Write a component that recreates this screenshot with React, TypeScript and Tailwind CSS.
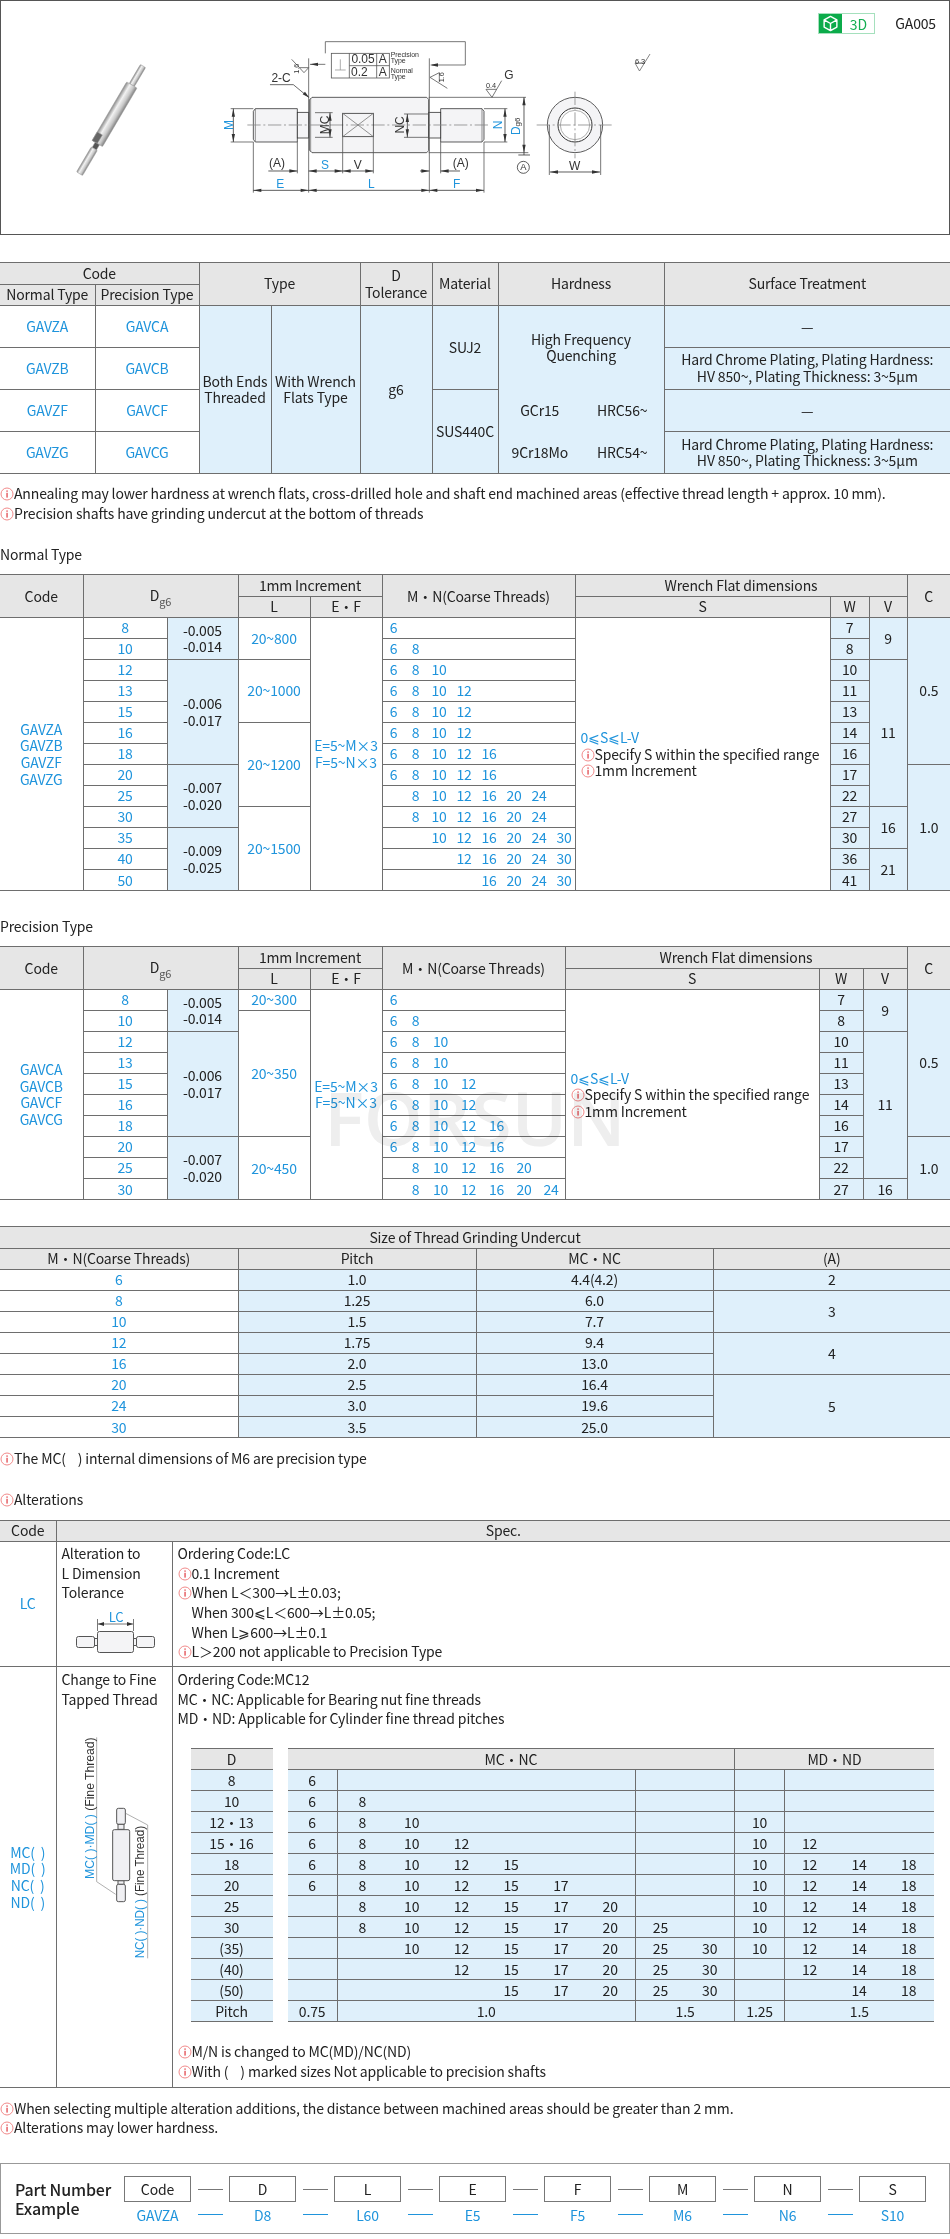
import type { ReactNode } from "react";

const line = "border border-[#6e6e6e]";
const head = "border border-[#6e6e6e] bg-[#e6e6e6] font-normal h-[21px] p-0 text-center align-middle";
const plain = "border border-[#6e6e6e] p-0 text-center align-middle";
const fill = "border border-[#6e6e6e] bg-[#dff0fb] p-0 text-center align-middle";
const blue = "border border-[#6e6e6e] text-[#1f94dc] p-0 text-center align-middle";
const wrap = "border-y border-[#6e6e6e]";
const tableCls = "w-full table-fixed border-collapse border-hidden leading-[16.6px]";

function Info() {
  return (
    <svg width="14" height="14" viewBox="0 0 14 14" className="inline-block align-[-2px]">
      <circle cx="7" cy="7" r="6" fill="none" stroke="#f28b8b" strokeWidth="1" />
      <rect x="6.4" y="5.8" width="1.3" height="4.8" fill="#e2494f" />
      <rect x="6.4" y="3.4" width="1.3" height="1.4" fill="#e2494f" />
    </svg>
  );
}

function Note({ children }: { children: ReactNode }) {
  return (
    <div className="h-[19.6px] leading-[19.6px] whitespace-nowrap">
      <Info />
      {children}
    </div>
  );
}

function Cols({ widths }: { widths: string[] }) {
  return (
    <colgroup>
      {widths.map((w, i) => (
        <col key={i} style={{ width: w }} />
      ))}
    </colgroup>
  );
}

function HDim({ x1, x2, y }: { x1: number; x2: number; y: number }) {
  return (
    <g>
      <path d={`M${x1} ${y}H${x2}`} />
      <path d={`M${x1} ${y}l24 -5v10z M${x2} ${y}l-24 -5v10z`} fill="#333" stroke="none" />
    </g>
  );
}

function VDim({ y1, y2, x }: { y1: number; y2: number; x: number }) {
  return (
    <g>
      <path d={`M${x} ${y1}V${y2}`} />
      <path d={`M${x} ${y1}l-5 24h10z M${x} ${y2}l-5 -24h10z`} fill="#333" stroke="none" />
    </g>
  );
}

function Label({ x, y, children, color = "#333", size = 36, rot }: { x: number; y: number; children: ReactNode; color?: string; size?: number; rot?: boolean }) {
  return (
    <text
      transform={`translate(${x} ${y})${rot ? " rotate(-90)" : ""}`}
      textAnchor="middle"
      dominantBaseline="central"
      fill={color}
      stroke="none"
      fontSize={size}
    >
      {children}
    </text>
  );
}

function Drawing() {
  const b = "#1f94dc";
  return (
    <svg width="948" height="233" viewBox="1 1 948 233" className="block" fontFamily="'Liberation Sans', sans-serif">
      <defs>
        <linearGradient id="shaft" x1="0" x2="1" y1="0" y2="0">
          <stop offset="0" stopColor="#8a8a8a" />
          <stop offset="0.35" stopColor="#f2f2f2" />
          <stop offset="0.7" stopColor="#c8c8c8" />
          <stop offset="1" stopColor="#808080" />
        </linearGradient>
      </defs>

      {/* product view */}
      <g transform="translate(143 66) rotate(30.5)" fill="url(#shaft)" stroke="#999" strokeWidth="0.5">
        <rect x="-3" y="0" width="6" height="22" rx="1" />
        <rect x="-6" y="22" width="12" height="68" rx="1" />
        <rect x="-6" y="80" width="6" height="10" fill="#666" />
        <rect x="-2.5" y="90" width="5" height="6" fill="#555" />
        <rect x="-3.5" y="96" width="7" height="29" rx="1" />
      </g>

      <g transform="translate(200 20) scale(.33333)" stroke="#333" strokeWidth="2.4" fill="none">
        <path d="M336 232H680L686 238V392L680 398H336L328 390V240Z" fill="#f4f4f6" />
        <path d="M166 266H292V366H166L160 358V274Z" fill="#f4f4f6" />
        <path d="M722 266H846L852 274V358L846 366H722Z" fill="#f4f4f6" />
        <rect x="292" y="277" width="34" height="77" fill="#f4f4f6" />
        <rect x="686" y="277" width="36" height="77" fill="#f4f4f6" />
        <path d="M166 266V366M846 266V366M332 234V396" stroke="#777" />
        <path d="M142 315H870" stroke="#888" strokeDasharray="40 8 6 8" />
        <rect x="428" y="280" width="92" height="70" />
        <path d="M428 280L520 350M520 280L428 350" stroke="#777" />

        {/* extension lines */}
        <path d="M160 366V518M326 115V518M688 115V518M852 366V518M428 350V460M520 350V460M292 366V460M722 366V460" stroke="#555" />
        <path d="M92 266H160M92 366H160M852 266H922M852 366H922M686 232H978M686 398H985M345 278H398M345 352H398M612 282H686M612 352H686" stroke="#555" />

        <VDim x={100} y1={266} y2={366} />
        <VDim x={915} y1={266} y2={366} />
        <VDim x={972} y1={232} y2={398} />
        <VDim x={390} y1={278} y2={352} />
        <VDim x={622} y1={282} y2={352} />
        <HDim x1={160} x2={326} y={511} />
        <HDim x1={326} x2={688} y={511} />
        <HDim x1={688} x2={852} y={511} />
        <HDim x1={326} x2={428} y={453} />
        <HDim x1={428} x2={520} y={453} />
        <path d="M205 453H292M660 453H688M722 453H780" />
        <path d="M292 453l-24 -5v10zM688 453l-24 -5v10zM722 453l24 -5v10z" fill="#333" stroke="none" />

        <Label x={88} y={315} color={b} rot>M</Label>
        <Label x={375} y={315} rot>MC</Label>
        <Label x={600} y={315} rot>NC</Label>
        <Label x={895} y={315} color={b} rot>N</Label>
        <text transform="translate(960 345) rotate(-90)" fill={b} stroke="none" fontSize="36">
          D<tspan fontSize="24" fill="#333">g6</tspan>
        </text>
        <Label x={231} y={430}>(A)</Label>
        <Label x={375} y={435} color={b}>S</Label>
        <Label x={473} y={435}>V</Label>
        <Label x={782} y={430}>(A)</Label>
        <Label x={241} y={493} color={b}>E</Label>
        <Label x={514} y={493} color={b}>L</Label>
        <Label x={770} y={493} color={b}>F</Label>

        {/* datum */}
        <path d="M972 398V405M955 405H990" />
        <circle cx="970" cy="442" r="18" />
        <Label x={970} y={442} size={28}>A</Label>

        {/* perpendicularity frame */}
        <path d="M376 100V65H796V135H695M376 133H330" stroke="#555" />
        <path d="M330 133l24 -5v10zM690 135l24 -5v10z" fill="#333" stroke="none" />
        <rect x="394" y="100" width="174" height="74" fill="#fff" stroke="#555" />
        <path d="M448 100V174M530 100V174M448 137H568" stroke="#555" />
        <path d="M421 118V150M405 150H437" stroke="#999" />
        <Label x={489} y={118}>0.05</Label>
        <Label x={548} y={118}>A</Label>
        <Label x={478} y={155}>0.2</Label>
        <Label x={548} y={155}>A</Label>
        <g stroke="none" fill="#333" fontSize="21">
          <text x="572" y="110">Precision</text>
          <text x="572" y="128">Type</text>
          <text x="572" y="158">Normal</text>
          <text x="572" y="177">Type</text>
        </g>

        {/* surface marks */}
        <path d="M275 118L312 158L326 143H298" stroke="#555" />
        <Label x={290} y={146} size={22} rot>1.6</Label>
        <path d="M742 205L690 172L718 158V186" stroke="#555" />
        <Label x={726} y={172} size={22} rot>1.6</Label>
        <Label x={243} y={174}>2-C</Label>
        <path d="M210 194H280L326 232" stroke="#444" />
        <path d="M328 233l-20 -10l7 -8z" fill="#333" stroke="none" />
        <Label x={927} y={165}>G</Label>
        <path d="M905 182L876 232L858 208H890" stroke="#555" />
        <Label x={873} y={198} size={22}>0.4</Label>

        {/* end view */}
        <circle cx="1125" cy="315" r="83" fill="#f4f4f6" />
        <circle cx="1125" cy="315" r="51" strokeWidth="3" fill="#fff" />
        <circle cx="1125" cy="315" r="44" stroke="#999" />
        <path d="M1010 315H1235M1125 215V415" stroke="#888" strokeDasharray="40 8 6 8" />
        <path d="M1048 315V465M1202 315V465" stroke="#555" />
        <HDim x1={1050} x2={1200} y={456} />
        <Label x={1124} y={438}>W</Label>
      </g>

      {/* 6.3 mark */}
      <path d="M650 54L639.5 71L635 63H645" fill="none" stroke="#666" strokeWidth="0.8" />
      <text x="640" y="64" fontSize="7.5" textAnchor="middle" fill="#333">6.3</text>
    </svg>
  );
}

const normalCols = "grid grid-cols-[22px_22px_25px_25px_25px_25px_25px_25px]";
const precisionCols = "grid grid-cols-[22px_22px_28px_28px_28px_27px_27px]";

function Nums({ values, all, cols }: { values: number[]; all: number[]; cols: string }) {
  return (
    <div className={`${cols} text-center`}>
      {all.map((n) => (
        <span key={n}>{values.includes(n) ? n : ""}</span>
      ))}
    </div>
  );
}

type Row = { d: number; m: number[]; w: number };

const normalRows: Row[] = [
  { d: 8, m: [6], w: 7 },
  { d: 10, m: [6, 8], w: 8 },
  { d: 12, m: [6, 8, 10], w: 10 },
  { d: 13, m: [6, 8, 10, 12], w: 11 },
  { d: 15, m: [6, 8, 10, 12], w: 13 },
  { d: 16, m: [6, 8, 10, 12], w: 14 },
  { d: 18, m: [6, 8, 10, 12, 16], w: 16 },
  { d: 20, m: [6, 8, 10, 12, 16], w: 17 },
  { d: 25, m: [8, 10, 12, 16, 20, 24], w: 22 },
  { d: 30, m: [8, 10, 12, 16, 20, 24], w: 27 },
  { d: 35, m: [10, 12, 16, 20, 24, 30], w: 30 },
  { d: 40, m: [12, 16, 20, 24, 30], w: 36 },
  { d: 50, m: [16, 20, 24, 30], w: 41 },
];

const precisionRows: Row[] = [
  { d: 8, m: [6], w: 7 },
  { d: 10, m: [6, 8], w: 8 },
  { d: 12, m: [6, 8, 10], w: 10 },
  { d: 13, m: [6, 8, 10], w: 11 },
  { d: 15, m: [6, 8, 10, 12], w: 13 },
  { d: 16, m: [6, 8, 10, 12], w: 14 },
  { d: 18, m: [6, 8, 10, 12, 16], w: 16 },
  { d: 20, m: [6, 8, 10, 12, 16], w: 17 },
  { d: 25, m: [8, 10, 12, 16, 20], w: 22 },
  { d: 30, m: [8, 10, 12, 16, 20, 24], w: 27 },
];

type Span = { at: number; n: number; a: string; b?: string };

const Dg6 = () => (
  <>
    D<sub className="text-[11px] text-[#555] align-[-2px] leading-none">g6</sub>
  </>
);

function SizeTable({
  widths,
  rows,
  codes,
  all,
  cols,
  tol,
  lens,
  vs,
  cs,
  children,
}: {
  widths: string[];
  rows: Row[];
  codes: string[];
  all: number[];
  cols: string;
  tol: Span[];
  lens: Span[];
  vs: Span[];
  cs: Span[];
  children?: ReactNode;
}) {
  const find = (list: Span[], i: number) => list.find((s) => s.at === i);
  return (
    <div className={`relative ${wrap}`}>
      <table className={tableCls}>
        <Cols widths={widths} />
        <thead>
          <tr>
            <th rowSpan={2} className={head}>Code</th>
            <th rowSpan={2} colSpan={2} className={head}><Dg6 /></th>
            <th colSpan={2} className={head}>1mm Increment</th>
            <th rowSpan={2} className={head}>M·N(Coarse Threads)</th>
            <th colSpan={3} className={head}>Wrench Flat dimensions</th>
            <th rowSpan={2} className={head}>C</th>
          </tr>
          <tr>
            <th className={head}>L</th>
            <th className={head}>E·F</th>
            <th className={head}>S</th>
            <th className={head}>W</th>
            <th className={head}>V</th>
          </tr>
        </thead>
        <tbody>
          {rows.map((r, i) => {
            const t = find(tol, i);
            const l = find(lens, i);
            const v = find(vs, i);
            const c = find(cs, i);
            return (
              <tr key={r.d}>
                {i === 0 && (
                  <td rowSpan={rows.length} className={blue}>
                    {codes.map((code) => (
                      <div key={code}>{code}</div>
                    ))}
                  </td>
                )}
                <td className={`${blue} h-[21px]`}>{r.d}</td>
                {t && (
                  <td rowSpan={t.n} className={fill}>
                    <div>{t.a}</div>
                    <div>{t.b}</div>
                  </td>
                )}
                {l && <td rowSpan={l.n} className={blue}>{l.a}</td>}
                {i === 0 && (
                  <td rowSpan={rows.length} className={blue}>
                    <div>E=5~M×3</div>
                    <div>F=5~N×3</div>
                  </td>
                )}
                <td className={`${blue} whitespace-nowrap`}>
                  <Nums values={r.m} all={all} cols={cols} />
                </td>
                {i === 0 && (
                  <td rowSpan={rows.length} className={`${line} p-0 pl-[5px] text-left align-middle`}>
                    <div className="text-[#1f94dc]">0⩽S⩽L-V</div>
                    <div className="whitespace-nowrap"><Info />Specify S within the specified range</div>
                    <div><Info />1mm Increment</div>
                  </td>
                )}
                <td className={fill}>{r.w}</td>
                {v && <td rowSpan={v.n} className={fill}>{v.a}</td>}
                {c && <td rowSpan={c.n} className={fill}>{c.a}</td>}
              </tr>
            );
          })}
        </tbody>
      </table>
      {children}
    </div>
  );
}

const undercut = [
  { m: 6, p: "1.0", mc: "4.4(4.2)", a: "2", n: 1 },
  { m: 8, p: "1.25", mc: "6.0", a: "3", n: 2 },
  { m: 10, p: "1.5", mc: "7.7" },
  { m: 12, p: "1.75", mc: "9.4", a: "4", n: 2 },
  { m: 16, p: "2.0", mc: "13.0" },
  { m: 20, p: "2.5", mc: "16.4", a: "5", n: 3 },
  { m: 24, p: "3.0", mc: "19.6" },
  { m: 30, p: "3.5", mc: "25.0" },
];

const fineHead = ["6", "8", "10", "12", "15", "17", "20", "25", "30", "10", "12", "14", "18"];
const fineRows = [
  { d: "8", on: "1000000000000" },
  { d: "10", on: "1100000000000" },
  { d: "12·13", on: "1110000001000" },
  { d: "15·16", on: "1111000001100" },
  { d: "18", on: "1111100001111" },
  { d: "20", on: "1111110001111" },
  { d: "25", on: "0111111001111" },
  { d: "30", on: "0111111101111" },
  { d: "(35)", on: "0011111111111" },
  { d: "(40)", on: "0001111110111" },
  { d: "(50)", on: "0000111110011" },
];

const fineCell = "bg-[#dff0fb] border-b border-[#6e6e6e] p-0 h-[21px] text-center";
const fineCellL = "bg-[#dff0fb] border-b border-l border-[#6e6e6e] p-0 h-[21px] text-center";

function FineTables() {
  return (
    <div className="mt-[19px] ml-[13px] flex gap-[15px] leading-[20px]">
      <table className="w-[82px] table-fixed border-collapse border-t border-[#6e6e6e]">
        <tbody>
          <tr>
            <td className="bg-[#e6e6e6] border-b border-[#6e6e6e] p-0 h-[21px] text-center">D</td>
          </tr>
          {fineRows.map((r) => (
            <tr key={r.d}>
              <td className={fineCell}>{r.d}</td>
            </tr>
          ))}
          <tr>
            <td className={fineCell}>Pitch</td>
          </tr>
        </tbody>
      </table>
      <table className="w-[646px] table-fixed border-collapse border-t border-[#6e6e6e]">
        <Cols widths={fineHead.map(() => "49.7px")} />
        <tbody>
          <tr>
            <td colSpan={9} className="bg-[#e6e6e6] border-b border-[#6e6e6e] p-0 h-[21px] text-center">MC·NC</td>
            <td colSpan={4} className="bg-[#e6e6e6] border-b border-l border-[#6e6e6e] p-0 h-[21px] text-center">MD·ND</td>
          </tr>
          {fineRows.map((r) => (
            <tr key={r.d}>
              {fineHead.map((n, i) => (
                <td key={i} className={i === 1 || i === 7 || i === 9 || i === 10 ? fineCellL : fineCell}>
                  {r.on[i] === "1" ? n : ""}
                </td>
              ))}
            </tr>
          ))}
          <tr>
            <td className={fineCell}>0.75</td>
            <td colSpan={6} className={fineCellL}>1.0</td>
            <td colSpan={2} className={fineCellL}>1.5</td>
            <td className={fineCellL}>1.25</td>
            <td colSpan={3} className={fineCellL}>1.5</td>
          </tr>
        </tbody>
      </table>
    </div>
  );
}

function LcPicture() {
  return (
    <svg width="116" height="48" viewBox="56 1608 116 48" className="block mt-[5px]" fontFamily="'Noto Sans CJK SC', sans-serif">
      <g fill="#f4f4f6" stroke="#555" strokeWidth="1">
        <rect x="75.5" y="1636.5" width="18" height="11" rx="2" />
        <rect x="93.5" y="1638.5" width="3" height="7" />
        <rect x="132.5" y="1638.5" width="3" height="7" />
        <rect x="135.5" y="1636.5" width="18" height="11" rx="2" />
        <rect x="96.5" y="1631.5" width="36" height="21" rx="2" />
      </g>
      <path d="M96.5 1619V1631M132.5 1619V1631M97 1624H132" stroke="#555" strokeWidth="0.8" />
      <path d="M97 1624l6 -2v4zM132 1624l-6 -2v4z" fill="#333" />
      <text x="115" y="1622" textAnchor="middle" fontSize="13" fill="#1f94dc">LC</text>
    </svg>
  );
}

function FinePicture() {
  return (
    <svg width="116" height="235" viewBox="56 1730 116 235" className="block mt-[21px]" fontFamily="'Liberation Sans', sans-serif">
      <g transform="translate(40 1700) scale(.33333)">
        <g fill="#f0f0f3" stroke="#555" strokeWidth="3">
          <rect x="227" y="325" width="26" height="48" rx="5" />
          <rect x="231" y="373" width="18" height="15" />
          <rect x="231" y="542" width="18" height="11" />
          <rect x="227" y="553" width="26" height="52" rx="5" />
          <rect x="215" y="389" width="51" height="153" rx="5" />
        </g>
        <path d="M167 112V545L224 583M320 775V375L254 340" fill="none" stroke="#888" strokeWidth="2" />
        <text transform="translate(158 537) rotate(-90)" fontSize="36" textLength="425" lengthAdjust="spacingAndGlyphs" fill="#333">
          <tspan fill="#1f94dc">MC( )·MD( )</tspan> (Fine Thread)
        </text>
        <text transform="translate(310 775) rotate(-90)" fontSize="36" textLength="397" lengthAdjust="spacingAndGlyphs" fill="#333">
          <tspan fill="#1f94dc">NC( )·ND( )</tspan> (Fine Thread)
        </text>
      </g>
    </svg>
  );
}

const partNumber = [
  ["Code", "GAVZA"],
  ["D", "D8"],
  ["L", "L60"],
  ["E", "E5"],
  ["F", "F5"],
  ["M", "M6"],
  ["N", "N6"],
  ["S", "S10"],
];

export default function App() {
  return (
    <div className="w-[950px] h-[2239px] overflow-hidden bg-white text-[14px] tracking-[-0.15px] text-[#222] font-['Noto_Sans_CJK_SC','Noto_Sans',sans-serif]">
      {/* technical drawing */}
      <div className="relative h-[235px] border border-[#555]">
        <Drawing />
        <div className="absolute top-[12px] right-[13px] flex items-center gap-[20px]">
          <div className="flex h-[21px] w-[57px] items-center border border-[#a5e0bd]">
            <div className="flex h-full w-[23px] items-center justify-center bg-[#0bab4a]">
              <svg width="17" height="17" viewBox="0 0 24 24" fill="none" stroke="#fff" strokeWidth="2" strokeLinejoin="round">
                <path d="M12 2 21 7V17L12 22 3 17V7Z M3 7 12 12 21 7 M12 12V22" />
              </svg>
            </div>
            <span className="flex-1 text-center text-[#12ae50] leading-none">3D</span>
          </div>
          <span>GA005</span>
        </div>
      </div>

      {/* overview */}
      <div className={`mt-[27px] ${wrap}`}>
        <table className={tableCls}>
          <Cols widths={["95px", "104px", "72px", "89px", "72px", "66px", "83px", "83px", "286px"]} />
          <thead>
            <tr>
              <th colSpan={2} className={head}>Code</th>
              <th colSpan={2} rowSpan={2} className={head}>Type</th>
              <th rowSpan={2} className={head}>D<br />Tolerance</th>
              <th rowSpan={2} className={head}>Material</th>
              <th colSpan={2} rowSpan={2} className={head}>Hardness</th>
              <th rowSpan={2} className={head}>Surface Treatment</th>
            </tr>
            <tr>
              <th className={head}>Normal Type</th>
              <th className={head}>Precision Type</th>
            </tr>
          </thead>
          <tbody>
            <tr>
              <td className={`${blue} h-[42px]`}>GAVZA</td>
              <td className={blue}>GAVCA</td>
              <td rowSpan={4} className={fill}>Both Ends<br />Threaded</td>
              <td rowSpan={4} className={fill}>With Wrench<br />Flats Type</td>
              <td rowSpan={4} className={fill}>g6</td>
              <td rowSpan={2} className={fill}>SUJ2</td>
              <td colSpan={2} rowSpan={2} className={fill + " border-b-0"}>High Frequency<br />Quenching</td>
              <td className={fill}>—</td>
            </tr>
            <tr>
              <td className={`${blue} h-[42px]`}>GAVZB</td>
              <td className={blue}>GAVCB</td>
              <td className={fill}>Hard Chrome Plating, Plating Hardness:<br />HV 850~, Plating Thickness: 3~5µm</td>
            </tr>
            <tr>
              <td className={`${blue} h-[42px]`}>GAVZF</td>
              <td className={blue}>GAVCF</td>
              <td rowSpan={2} className={fill}>SUS440C</td>
              <td className={fill + " border-y-0 border-r-0"}>GCr15</td>
              <td className={fill + " border-y-0 border-l-0"}>HRC56~</td>
              <td className={fill}>—</td>
            </tr>
            <tr>
              <td className={`${blue} h-[42px]`}>GAVZG</td>
              <td className={blue}>GAVCG</td>
              <td className={fill + " border-y-0 border-r-0"}>9Cr18Mo</td>
              <td className={fill + " border-y-0 border-l-0"}>HRC54~</td>
              <td className={fill}>Hard Chrome Plating, Plating Hardness:<br />HV 850~, Plating Thickness: 3~5µm</td>
            </tr>
          </tbody>
        </table>
      </div>

      <div className="mt-[10px]">
        <Note>Annealing may lower hardness at wrench flats, cross-drilled hole and shaft end machined areas (effective thread length + approx. 10 mm).</Note>
        <Note>Precision shafts have grinding undercut at the bottom of threads</Note>
      </div>

      <div className="mt-[21px] h-[20px] leading-[20px]">Normal Type</div>
      <div className="mt-[10px]">
        <SizeTable
          widths={["83px", "84px", "71px", "72px", "72px", "193px", "255px", "39px", "38px", "43px"]}
          rows={normalRows}
          codes={["GAVZA", "GAVZB", "GAVZF", "GAVZG"]}
          all={[6, 8, 10, 12, 16, 20, 24, 30]}
          cols={normalCols}
          tol={[
            { at: 0, n: 2, a: "-0.005", b: "-0.014" },
            { at: 2, n: 5, a: "-0.006", b: "-0.017" },
            { at: 7, n: 3, a: "-0.007", b: "-0.020" },
            { at: 10, n: 3, a: "-0.009", b: "-0.025" },
          ]}
          lens={[
            { at: 0, n: 2, a: "20~800" },
            { at: 2, n: 3, a: "20~1000" },
            { at: 5, n: 4, a: "20~1200" },
            { at: 9, n: 4, a: "20~1500" },
          ]}
          vs={[
            { at: 0, n: 2, a: "9" },
            { at: 2, n: 7, a: "11" },
            { at: 9, n: 2, a: "16" },
            { at: 11, n: 2, a: "21" },
          ]}
          cs={[
            { at: 0, n: 7, a: "0.5" },
            { at: 7, n: 6, a: "1.0" },
          ]}
        />
      </div>

      <div className="mt-[25px] h-[20px] leading-[20px]">Precision Type</div>
      <div className="mt-[10px]">
        <SizeTable
          widths={["83px", "84px", "71px", "72px", "72px", "183px", "254px", "44px", "44px", "43px"]}
          rows={precisionRows}
          codes={["GAVCA", "GAVCB", "GAVCF", "GAVCG"]}
          all={[6, 8, 10, 12, 16, 20, 24]}
          cols={precisionCols}
          tol={[
            { at: 0, n: 2, a: "-0.005", b: "-0.014" },
            { at: 2, n: 5, a: "-0.006", b: "-0.017" },
            { at: 7, n: 3, a: "-0.007", b: "-0.020" },
          ]}
          lens={[
            { at: 0, n: 1, a: "20~300" },
            { at: 1, n: 6, a: "20~350" },
            { at: 7, n: 3, a: "20~450" },
          ]}
          vs={[
            { at: 0, n: 2, a: "9" },
            { at: 2, n: 7, a: "11" },
            { at: 9, n: 1, a: "16" },
          ]}
          cs={[
            { at: 0, n: 7, a: "0.5" },
            { at: 7, n: 3, a: "1.0" },
          ]}
        >
          <span className="pointer-events-none absolute left-[324px] top-[133px] text-[75px] leading-none font-semibold text-[#eeeeee] mix-blend-multiply font-['Open_Sans',sans-serif]">
            FORSUN
          </span>
        </SizeTable>
      </div>

      {/* thread undercut */}
      <div className={`mt-[26px] ${wrap}`}>
        <table className={tableCls}>
          <Cols widths={["238px", "238px", "237px", "237px"]} />
          <thead>
            <tr>
              <th colSpan={4} className={head}>Size of Thread Grinding Undercut</th>
            </tr>
            <tr>
              <th className={head}>M·N(Coarse Threads)</th>
              <th className={head}>Pitch</th>
              <th className={head}>MC·NC</th>
              <th className={head}>(A)</th>
            </tr>
          </thead>
          <tbody>
            {undercut.map((r) => (
              <tr key={r.m}>
                <td className={`${blue} h-[21px]`}>{r.m}</td>
                <td className={fill}>{r.p}</td>
                <td className={fill}>{r.mc}</td>
                {r.a && <td rowSpan={r.n} className={fill}>{r.a}</td>}
              </tr>
            ))}
          </tbody>
        </table>
      </div>

      <div className="mt-[11px]">
        <Note>The MC(&nbsp;&nbsp;&nbsp;&nbsp;) internal dimensions of M6 are precision type</Note>
      </div>
      <div className="mt-[21px]">
        <Note>Alterations</Note>
      </div>

      {/* alterations */}
      <div className={`mt-[10.4px] ${wrap}`}>
        <table className="w-full table-fixed border-collapse border-hidden leading-[19.6px]">
          <Cols widths={["56px", "116px", "778px"]} />
          <thead>
            <tr>
              <th className={head}>Code</th>
              <th colSpan={2} className={head}>Spec.</th>
            </tr>
          </thead>
          <tbody>
            <tr>
              <td className={`${blue} h-[125px]`}>LC</td>
              <td className={`${line} p-0 pt-[2px] align-top`}>
                <div className="px-[5px]">Alteration to<br />L Dimension<br />Tolerance</div>
                <LcPicture />
              </td>
              <td className={`${line} p-0 pt-[2px] pl-[5px] align-top`}>
                <div>Ordering Code:LC</div>
                <Note>0.1 Increment</Note>
                <Note>When L＜300→L±0.03;</Note>
                <div className="pl-[14px]">When 300⩽L＜600→L±0.05;</div>
                <div className="pl-[14px]">When L⩾600→L±0.1</div>
                <Note>L＞200 not applicable to Precision Type</Note>
              </td>
            </tr>
            <tr>
              <td className={`${blue} h-[420px] leading-[16.6px]`}>
                <div>MC(&nbsp;&nbsp;)</div>
                <div>MD(&nbsp;&nbsp;)</div>
                <div>NC(&nbsp;&nbsp;)</div>
                <div>ND(&nbsp;&nbsp;)</div>
              </td>
              <td className={`${line} p-0 pt-[3px] align-top`}>
                <div className="px-[5px]">Change to Fine<br />Tapped Thread</div>
                <FinePicture />
              </td>
              <td className={`${line} p-0 pt-[3px] pl-[5px] align-top`}>
                <div>Ordering Code:MC12</div>
                <div>MC·NC: Applicable for Bearing nut fine threads</div>
                <div>MD·ND: Applicable for Cylinder fine thread pitches</div>
                <FineTables />
                <div className="mt-[20px]">
                  <Note>M/N is changed to MC(MD)/NC(ND)</Note>
                  <Note>With (&nbsp;&nbsp;&nbsp;&nbsp;) marked sizes Not applicable to precision shafts</Note>
                </div>
              </td>
            </tr>
          </tbody>
        </table>
      </div>

      <div className="mt-[11px]">
        <Note>When selecting multiple alteration additions, the distance between machined areas should be greater than 2 mm.</Note>
        <Note>Alterations may lower hardness.</Note>
      </div>

      {/* part number */}
      <div className="mt-[24.6px] flex h-[71px] border border-[#999]">
        <div className="w-[123px] pl-[14px] pt-[16px] text-[16px] leading-[19px] font-medium">
          Part Number<br />Example
        </div>
        <div className="flex pt-[12px]">
          {partNumber.map(([code, sample], i) => (
            <div key={code} className="flex">
              <div className="w-[67px] text-center">
                <div className="h-[26px] border border-[#777] leading-[24px]">{code}</div>
                <div className="mt-[3px] leading-[20px] text-[#1f94dc]">{sample}</div>
              </div>
              {i < partNumber.length - 1 && (
                <div className="w-[38px]">
                  <div className="mx-auto mt-[13px] h-px w-[25px] bg-[#777]" />
                  <div className="mx-auto mt-[24px] h-px w-[25px] bg-[#1f94dc]" />
                </div>
              )}
            </div>
          ))}
        </div>
      </div>
    </div>
  );
}
